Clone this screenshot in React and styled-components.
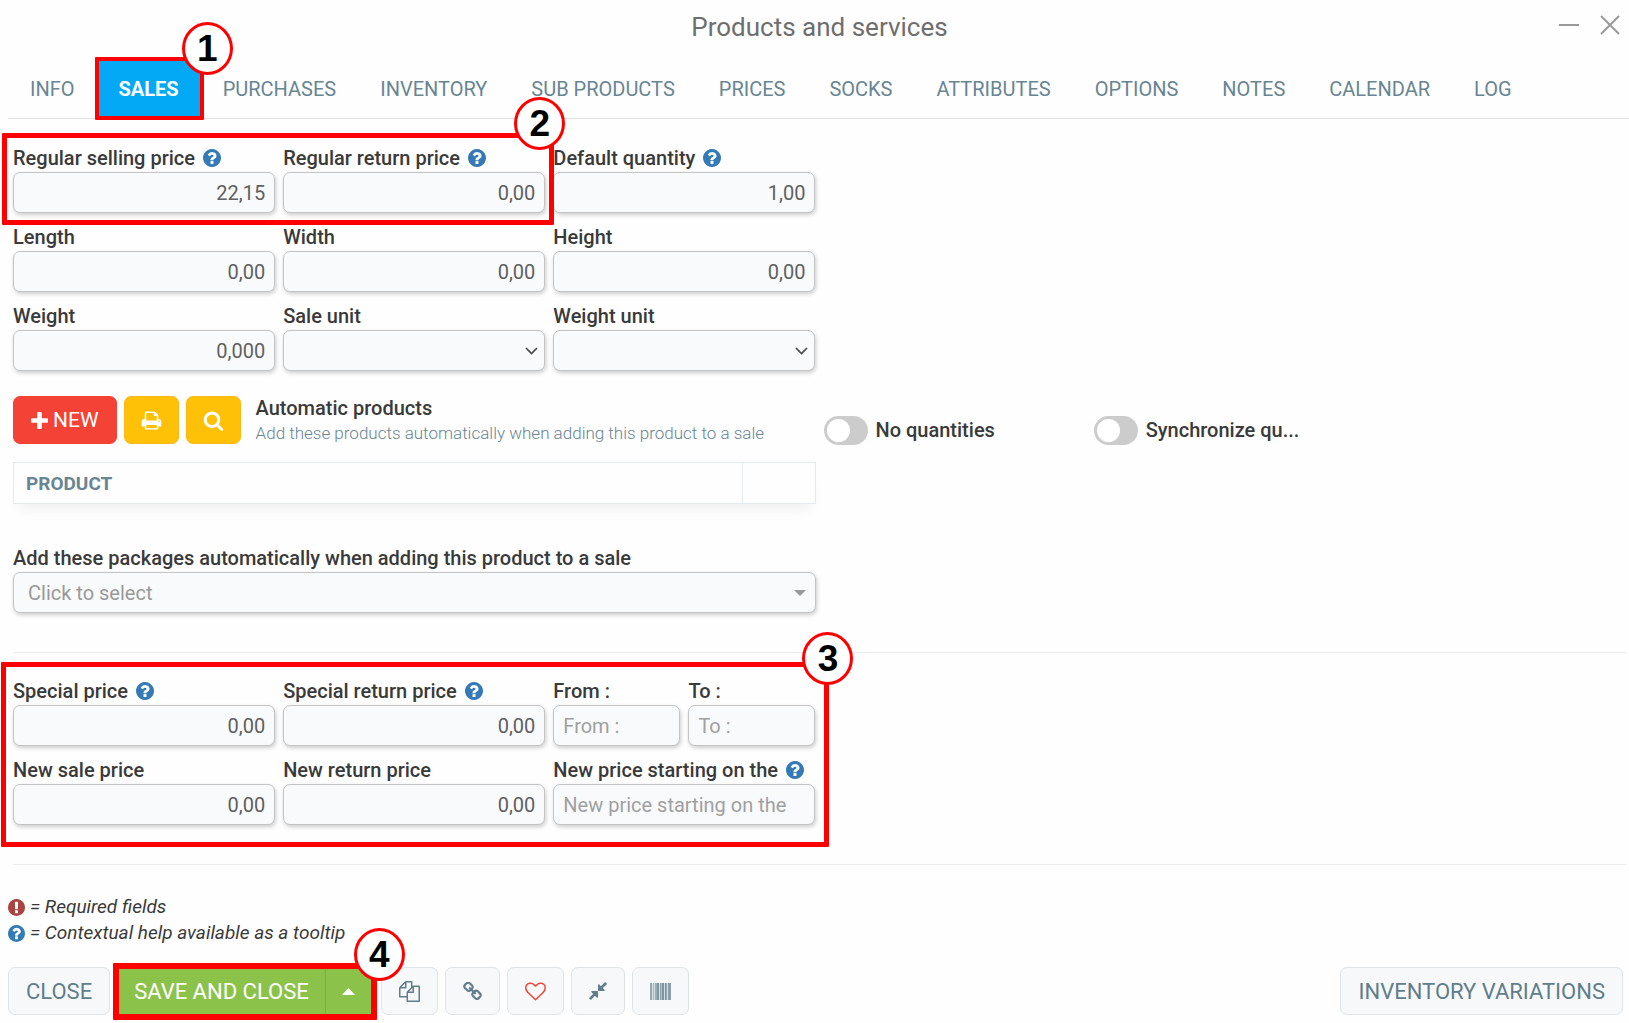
import { useState } from 'react';
import styled, { createGlobalStyle } from 'styled-components';

const GlobalStyle = createGlobalStyle`
  * {
    box-sizing: border-box;
  }

  body {
    margin: 0;
    background: #fefefe;
    color: #3a3a3a;
    font-family: Roboto, 'Liberation Sans', sans-serif;
    font-size: 20px;
  }

  button, input, select {
    font-family: inherit;
  }
`;

const Header = styled.header`
  display: grid;
  grid-template-columns: 80px 1fr 70px;
  align-items: center;
  height: 60px;
  padding-bottom: 6px;
`;

const Title = styled.h1`
  margin: 0;
  color: #6e6e6e;
  font-size: 26px;
  font-weight: 400;
  text-align: center;
`;

const WindowButtons = styled.div`
  display: flex;
  gap: 21px;
  height: 50px;
  align-items: center;
  align-self: start;
`;

const WindowButton = styled.button`
  display: flex;
  padding: 0;
  border: 0;
  background: none;
  color: #999;
  cursor: pointer;
`;

const Tabs = styled.nav`
  display: flex;
  gap: 2px;
  height: 59px;
  margin-left: 8px;
  padding-left: 1px;
  border-bottom: 1px solid #dfe1e3;
`;

const TabItem = styled.div`
  position: relative;
  display: flex;
`;

const Tab = styled.button`
  height: 57px;
  padding: 0 21px;
  border: 0;
  background: ${props => props.$active ? '#03a9f4' : 'transparent'};
  color: ${props => props.$active ? '#fff' : '#688593'};
  font-size: 20px;
  font-weight: ${props => props.$active ? 700 : 400};
  cursor: pointer;
`;

const Panel = styled.main`
  padding: 26px 3px 0 13px;
`;

const Grid = styled.div`
  display: grid;
  grid-template-columns: repeat(6, 1fr);
  column-gap: 8px;
  row-gap: 11px;
`;

const Group = styled.div`
  position: relative;
  grid-column: span ${props => props.$span};
  display: grid;
  grid-template-columns: subgrid;
  row-gap: 11px;
`;

const FieldBox = styled.div`
  grid-column: span ${props => props.$span || 1};
  min-width: 0;
`;

const FieldLabel = styled.label`
  display: flex;
  align-items: center;
  gap: 8px;
  height: 27px;
  padding-bottom: 2px;
  font-size: 20px;
  font-weight: 500;
  white-space: nowrap;
`;

const Input = styled.input`
  display: block;
  width: 100%;
  height: 41px;
  padding: 0 9px;
  border: 1px solid #c4c4c4;
  border-radius: 7px;
  background: #f8fafc;
  box-shadow: 1px 2px 4px rgba(0, 0, 0, 0.2);
  color: #606060;
  font-size: 20px;
  text-align: ${props => props.$numeric ? 'right' : 'left'};

  &::placeholder {
    color: #a0a0a0;
  }
`;

const SelectWrap = styled.div`
  position: relative;

  svg {
    position: absolute;
    top: 50%;
    right: ${props => props.$wide ? '10px' : '7px'};
    transform: translateY(-50%);
    pointer-events: none;
  }
`;

const Select = styled(Input)`
  appearance: none;
  padding: 0 14px;
  color: #999;
`;

const SplitFields = styled.div`
  display: grid;
  grid-template-columns: 1fr 1fr;
  gap: 8px;
`;

const ProductsRow = styled(Grid)`
  align-items: center;
  margin-top: 24px;
`;

const ProductsTools = styled.div`
  grid-column: span 3;
  display: flex;
  align-items: center;
  gap: 7px;
`;

const ToolButton = styled.button`
  display: flex;
  align-items: center;
  justify-content: center;
  gap: 5px;
  height: 48px;
  min-width: 55px;
  padding: 0 ${props => props.$red ? '17px' : '0'};
  border: 1px solid ${props => props.$red ? '#f44336' : '#fbb917'};
  border-radius: 7px;
  background: ${props => props.$red ? '#f44336' : '#ffc107'};
  color: #fff;
  font-size: 21px;
  cursor: pointer;
`;

const ProductsText = styled.div`
  margin-left: 8px;
`;

const ProductsTitle = styled.h2`
  margin: 0;
  font-size: 20px;
  font-weight: 500;
  line-height: 26px;
`;

const ProductsHint = styled.p`
  margin: 0;
  color: #688593;
  font-size: 17px;
  font-weight: 300;
  line-height: 24px;
  white-space: nowrap;
`;

const SwitchLabel = styled.label`
  display: flex;
  align-items: center;
  gap: 8px;
  margin-top: 20px;
  font-weight: 500;
  line-height: 29px;
`;

const Switch = styled.input`
  appearance: none;
  flex: none;
  width: 44px;
  height: 29px;
  margin: 0;
  padding: 3px;
  border-radius: 15px;
  background: #ccc;
  cursor: pointer;

  &::before {
    content: '';
    display: block;
    width: 23px;
    height: 23px;
    border-radius: 50%;
    background: #fff;
  }

  &:checked::before {
    margin-left: 15px;
  }
`;

const ProductTable = styled.table`
  grid-column: span 3;
  width: 100%;
  height: 42px;
  border-collapse: collapse;
  box-shadow: 0 12px 14px -6px rgba(0, 0, 0, 0.06);

  th {
    padding: 0 12px;
    border: 1px solid #e4ebef;
    background: #fefefe;
    color: #688593;
    font-size: 19px;
    font-weight: 700;
    text-align: left;
  }

  th:last-child {
    width: 73px;
  }
`;

const TableGrid = styled(Grid)`
  margin: 17px 0 41px;
`;

const Divider = styled.hr`
  height: 1px;
  margin: 39px 0 0;
  border: 0;
  background: #ececec;
`;

const SpecialGrid = styled(Grid)`
  margin-top: 25px;
`;

const Legend = styled.div`
  padding: 29px 0 0 8px;
`;

const LegendLine = styled.p`
  display: flex;
  align-items: center;
  gap: 5px;
  margin: 0;
  font-size: 19px;
  font-style: italic;
  line-height: 26px;
`;

const Footer = styled.footer`
  display: flex;
  align-items: center;
  gap: 7px;
  padding: 21px 6px 8px 8px;
`;

const FooterButton = styled.button`
  display: flex;
  align-items: center;
  justify-content: center;
  height: 48px;
  padding: 0 17px;
  border: 1px solid #dde3e6;
  border-radius: 7px;
  background: #f7f8fa;
  color: ${props => props.$color || '#607d8b'};
  font-size: 22px;
  white-space: nowrap;
  cursor: pointer;
`;

const SaveGroup = styled.div`
  position: relative;
  display: flex;
  height: 48px;
  margin: 0 2px 0 1px;
`;

const SaveButton = styled.button`
  display: flex;
  align-items: center;
  justify-content: center;
  padding: 0 16px;
  border: 0;
  border-right: 1px solid #5cb85c;
  background: #8bc34a;
  color: #fff;
  font-size: 22px;
  white-space: nowrap;
  cursor: pointer;
`;

const SaveMenuButton = styled(SaveButton)`
  width: 46px;
  border-right: 0;
`;

const Spacer = styled.div`
  flex: 1;
`;

// Red frame drawn over the area that a step talks about
const Frame = styled.div`
  position: absolute;
  z-index: 1;
  inset: ${props => props.$inset};
  border: ${props => props.$thick}px solid #f00;
  border-radius: 1px;
  pointer-events: none;
`;

const StepBadge = styled.span`
  position: absolute;
  top: ${props => props.$top}px;
  right: ${props => props.$right}px;
  display: flex;
  align-items: center;
  justify-content: center;
  width: 51px;
  height: 53px;
  border: 3px solid #f00;
  border-radius: 50%;
  background: #fff;
  color: #000;
  font-family: 'Liberation Sans', Arial, sans-serif;
  font-size: 37px;
  font-weight: 700;
  line-height: 47px;
`;

const ICONS = {
  help: 'M1024 1376v-192q0-14-9-23t-23-9h-192q-14 0-23 9t-9 23v192q0 14 9 23t23 9h192q14 0 23-9t9-23zm256-672q0-88-55.5-163t-138.5-116-170-41q-243 0-371 213-15 24 8 42l132 100q7 6 19 6 16 0 25-12 53-68 86-92 34-24 86-24 48 0 85.5 26t37.5 59q0 38-20 61t-68 45q-63 28-115.5 86.5t-52.5 125.5v36q0 14 9 23t23 9h192q14 0 23-9t9-23q0-19 21.5-49.5t54.5-49.5q32-18 49-28.5t46-35 44.5-48 28-60.5 12.5-81zm384 192q0 209-103 385.5t-279.5 279.5-385.5 103-385.5-103-279.5-279.5-103-385.5 103-385.5 279.5-279.5 385.5-103 385.5 103 279.5 279.5 103 385.5z',
  required: 'M896 128q209 0 385.5 103t279.5 279.5 103 385.5-103 385.5-279.5 279.5-385.5 103-385.5-103-279.5-279.5-103-385.5 103-385.5 279.5-279.5 385.5-103zm128 1247v-190q0-14-9-23.5t-22-9.5h-192q-13 0-23 10t-10 23v190q0 13 10 23t23 10h192q13 0 22-9.5t9-23.5zm-2-344l18-621q0-12-10-18-10-8-24-8h-220q-14 0-24 8-10 6-10 18l17 621q0 10 10 17.5t24 7.5h185q14 0 23.5-7.5t10.5-17.5z',
  plus: 'M1600 736v192q0 40-28 68t-68 28h-416v416q0 40-28 68t-68 28h-192q-40 0-68-28t-28-68v-416h-416q-40 0-68-28t-28-68v-192q0-40 28-68t68-28h416v-416q0-40 28-68t68-28h192q40 0 68 28t28 68v416h416q40 0 68 28t28 68z',
  print: 'M448 1536h896v-256h-896v256zm0-640h896v-384h-160q-40 0-68-28t-28-68v-160h-640v640zm1152 64q0-26-19-45t-45-19-45 19-19 45 19 45 45 19 45-19 19-45zm128 0v416q0 13-9.5 22.5t-22.5 9.5h-224v160q0 40-28 68t-68 28h-960q-40 0-68-28t-28-68v-160h-224q-13 0-22.5-9.5t-9.5-22.5v-416q0-79 56.5-135.5t135.5-56.5h64v-544q0-40 28-68t68-28h672q40 0 88 20t76 48l152 152q28 28 48 76t20 88v256h64q79 0 135.5 56.5t56.5 135.5z',
  search: 'M1216 832q0-185-131.5-316.5t-316.5-131.5-316.5 131.5-131.5 316.5 131.5 316.5 316.5 131.5 316.5-131.5 131.5-316.5zm512 832q0 52-38 90t-90 38q-54 0-90-38l-343-342q-179 124-399 124-143 0-273.5-55.5t-225-150-150-225-55.5-273.5 55.5-273.5 150-225 225-150 273.5-55.5 273.5 55.5 225 150 150 225 55.5 273.5q0 220-124 399l343 343q37 37 37 90z',
  copy: 'M1696 384q40 0 68 28t28 68v1216q0 40-28 68t-68 28h-960q-40 0-68-28t-28-68v-288h-544q-40 0-68-28t-28-68v-672q0-40 20-88t48-76l408-408q28-28 76-48t88-20h416q40 0 68 28t28 68v328q68-40 128-40h416zm-544 213l-299 299h299v-299zm-640-384l-299 299h299v-299zm196 647l316-316v-416h-384v416q0 40-28 68t-68 28h-416v640h512v-256q0-40 20-88t48-76zm956 804v-1152h-384v416q0 40-28 68t-68 28h-416v640h896z',
  link: 'M1520 1216q0-40-28-68l-208-208q-28-28-68-28-42 0-72 32 3 3 19 18.5t21.5 21.5 15 19 13 25.5 3.5 27.5q0 40-28 68t-68 28q-15 0-27.5-3.5t-25.5-13-19-15-21.5-21.5-18.5-19q-33 31-33 73 0 40 28 68l206 207q27 27 68 27 40 0 68-26l147-146q28-28 28-67zm-703-705q0-40-28-68l-206-207q-28-28-68-28-39 0-68 27l-147 146q-28 28-28 67 0 40 28 68l208 208q27 27 68 27 42 0 72-31-3-3-19-18.5t-21.5-21.5-15-19-13-25.5-3.5-27.5q0-40 28-68t68-28q15 0 27.5 3.5t25.5 13 19 15 21.5 21.5 18.5 19q33-31 33-73zm895 705q0 120-85 203l-147 146q-83 83-203 83-121 0-204-85l-206-207q-83-83-83-203 0-123 88-209l-88-88q-86 88-208 88-120 0-204-84l-208-208q-84-84-84-204t85-203l147-146q83-83 203-83 121 0 204 85l206 207q83 83 83 203 0 123-88 209l88 88q86-88 208-88 120 0 204 84l208 208q84 84 84 204z',
  heart: 'M1664 596q0-81-21.5-143t-55-98.5-81.5-59.5-94-31-98-8-112 25.5-110.5 64-86.5 72-60 61.5q-18 22-49 22t-49-22q-24-28-60-61.5t-86.5-72-110.5-64-112-25.5-98 8-94 31-81.5 59.5-55 98.5-21.5 143q0 168 187 355l581 560 580-559q188-188 188-356zm128 0q0 221-229 450l-623 600q-18 18-44 18t-44-18l-624-602q-10-8-27.5-26t-55.5-65.5-68-97.5-53.5-121-23.5-138q0-220 127-344t351-124q62 0 126.5 21.5t120 58 95.5 68.5 76 68q36-36 76-68t95.5-68.5 120-58 126.5-21.5q224 0 351 124t127 344z',
  compress: 'M896 960v448q0 26-19 45t-45 19-45-19l-144-144-332 332q-10 10-23 10t-23-10l-114-114q-10-10-10-23t10-23l332-332-144-144q-19-19-19-45t19-45 45-19h448q26 0 45 19t19 45zm755-672q0 13-10 23l-332 332 144 144q19 19 19 45t-19 45-45 19h-448q-26 0-45-19t-19-45v-448q0-26 19-45t45-19 45 19l144 144 332-332q10-10 23-10t23 10l114 114q10 10 10 23z',
};

const Icon = ({ name, size, color = 'currentColor', viewBox = '0 0 1792 1792' }) => (
  <svg width={size} height={size} viewBox={viewBox} fill={color} aria-hidden="true">
    <path d={ICONS[name]} />
  </svg>
);

const HelpIcon = () => <Icon name="help" size={18} color="#337ab7" viewBox="128 128 1536 1536" />;

const BARS = [
  [0, 2, 0.55], [3, 1, 0.4], [5, 2, 0.5], [7, 2, 0.75], [10, 1, 0.6],
  [11, 1, 0.35], [12, 2, 0.75], [15, 1, 0.8], [16, 1, 0.55], [18, 3, 0.65],
];

const Barcode = () => (
  <svg width="21" height="17" viewBox="0 0 21 17" fill="#607d8b" aria-hidden="true">
    <rect width="21" height="17" opacity="0.2" />
    {BARS.map(([x, w, opacity]) => (
      <rect key={x} x={x} width={w} height="17" opacity={opacity} />
    ))}
  </svg>
);

const Chevron = () => (
  <svg width="13" height="8" viewBox="0 0 13 8" fill="none" stroke="#4a4a4a" strokeWidth="1.7" aria-hidden="true">
    <path d="M1 1l5.5 5.5L12 1" />
  </svg>
);

const CaretDown = () => (
  <svg width="12" height="6" viewBox="0 0 12 6" fill="#999" aria-hidden="true">
    <path d="M0 0h12L6 6z" />
  </svg>
);

const Field = ({ id, label, value, placeholder, help }) => (
  <FieldBox>
    <FieldLabel htmlFor={id}>
      {label}
      {help && <HelpIcon />}
    </FieldLabel>
    <Input id={id} type="text" defaultValue={value} placeholder={placeholder} $numeric={!placeholder} />
  </FieldBox>
);

const SelectField = ({ id, label, option = '', wide }) => (
  <FieldBox $span={wide ? 3 : 1}>
    <FieldLabel htmlFor={id}>{label}</FieldLabel>
    <SelectWrap $wide={wide}>
      <Select as="select" id={id}>
        <option>{option}</option>
      </Select>
      {wide ? <CaretDown /> : <Chevron />}
    </SelectWrap>
  </FieldBox>
);

const tabs = [
  'INFO', 'SALES', 'PURCHASES', 'INVENTORY', 'SUB PRODUCTS', 'PRICES',
  'SOCKS', 'ATTRIBUTES', 'OPTIONS', 'NOTES', 'CALENDAR', 'LOG',
];

const App = () => {
  const [activeTab, setActiveTab] = useState('SALES');

  return (
    <>
      <GlobalStyle />
      <Header>
        <span />
        <Title>Products and services</Title>
        <WindowButtons>
          <WindowButton aria-label="Minimize">
            <svg width="20" height="20" stroke="currentColor" strokeWidth="2" fill="none"><path d="M0 10h20" /></svg>
          </WindowButton>
          <WindowButton aria-label="Close window">
            <svg width="20" height="20" stroke="currentColor" strokeWidth="2" fill="none"><path d="M1 1l18 18M19 1L1 19" /></svg>
          </WindowButton>
        </WindowButtons>
      </Header>

      <Tabs>
        {tabs.map((tab) => (
          <TabItem key={tab}>
            <Tab $active={activeTab === tab} onClick={() => setActiveTab(tab)}>{tab}</Tab>
            {tab === 'SALES' && (
              <Frame $inset="-3px -4px -2px -3px" $thick={4}>
                <StepBadge $top={-39} $right={-33}>1</StepBadge>
              </Frame>
            )}
          </TabItem>
        ))}
      </Tabs>

      <Panel>
        <Grid>
          <Group $span={2}>
            <Field id="selling-price" label="Regular selling price" value="22,15" help />
            <Field id="return-price" label="Regular return price" value="0,00" help />
            <Frame $inset="-12px -9px -12px -11px" $thick={5}>
              <StepBadge $top={-41} $right={-16}>2</StepBadge>
            </Frame>
          </Group>
          <Group $span={4}>
            <Field id="default-quantity" label="Default quantity" value="1,00" help />
          </Group>
          <Group $span={6}>
            <Field id="length" label="Length" value="0,00" />
            <Field id="width" label="Width" value="0,00" />
            <Field id="height" label="Height" value="0,00" />
          </Group>
          <Group $span={6}>
            <Field id="weight" label="Weight" value="0,000" />
            <SelectField id="sale-unit" label="Sale unit" />
            <SelectField id="weight-unit" label="Weight unit" />
          </Group>
        </Grid>

        <ProductsRow>
          <ProductsTools>
            <ToolButton $red><Icon name="plus" size={17} viewBox="192 128 1408 1408" />NEW</ToolButton>
            <ToolButton aria-label="Print"><Icon name="print" size={21} /></ToolButton>
            <ToolButton aria-label="Search"><Icon name="search" size={21} /></ToolButton>
            <ProductsText>
              <ProductsTitle>Automatic products</ProductsTitle>
              <ProductsHint>Add these products automatically when adding this product to a sale</ProductsHint>
            </ProductsText>
          </ProductsTools>
          <SwitchLabel>
            <Switch type="checkbox" role="switch" />
            No quantities
          </SwitchLabel>
          <SwitchLabel>
            <Switch type="checkbox" role="switch" />
            Synchronize qu...
          </SwitchLabel>
        </ProductsRow>

        <TableGrid>
          <ProductTable>
            <thead>
              <tr>
                <th>PRODUCT</th>
                <th />
              </tr>
            </thead>
          </ProductTable>
        </TableGrid>

        <Grid>
          <SelectField
            id="packages"
            label="Add these packages automatically when adding this product to a sale"
            option="Click to select"
            wide
          />
        </Grid>

        <Divider />

        <SpecialGrid>
          <Group $span={3}>
            <Field id="special-price" label="Special price" value="0,00" help />
            <Field id="special-return" label="Special return price" value="0,00" help />
            <SplitFields>
              <Field id="from" label="From :" placeholder="From :" />
              <Field id="to" label="To :" placeholder="To :" />
            </SplitFields>
            <Field id="new-sale" label="New sale price" value="0,00" />
            <Field id="new-return" label="New return price" value="0,00" />
            <Field id="new-start" label="New price starting on the" placeholder="New price starting on the" help />
            <Frame $inset="-16px -14px -22px -12px" $thick={5}>
              <StepBadge $top={-35} $right={-29}>3</StepBadge>
            </Frame>
          </Group>
        </SpecialGrid>

        <Divider />
      </Panel>

      <Legend>
        <LegendLine>
          <Icon name="required" size={17} color="#a94442" viewBox="128 128 1536 1536" />
          = Required fields
        </LegendLine>
        <LegendLine>
          <Icon name="help" size={17} color="#337ab7" viewBox="128 128 1536 1536" />
          = Contextual help available as a tooltip
        </LegendLine>
      </Legend>

      <Footer>
        <FooterButton>CLOSE</FooterButton>
        <SaveGroup>
          <SaveButton>SAVE AND CLOSE</SaveButton>
          <SaveMenuButton aria-label="More save options">
            <svg width="13" height="7" viewBox="0 0 13 7" fill="#fff"><path d="M0 7h13L6.5 0z" /></svg>
          </SaveMenuButton>
          <Frame $inset="-4px -5px -5px -5px" $thick={6}>
            <StepBadge $top={-41} $right={-34}>4</StepBadge>
          </Frame>
        </SaveGroup>
        <FooterButton aria-label="Duplicate"><Icon name="copy" size={21} /></FooterButton>
        <FooterButton aria-label="Link"><Icon name="link" size={19} viewBox="64 64 1664 1664" /></FooterButton>
        <FooterButton $color="#f44336" aria-label="Favorite"><Icon name="heart" size={21} /></FooterButton>
        <FooterButton aria-label="Compress"><Icon name="compress" size={18} viewBox="128 128 1536 1536" /></FooterButton>
        <FooterButton aria-label="Barcode"><Barcode /></FooterButton>
        <Spacer />
        <FooterButton>INVENTORY VARIATIONS</FooterButton>
      </Footer>
    </>
  );
};

export default App;
